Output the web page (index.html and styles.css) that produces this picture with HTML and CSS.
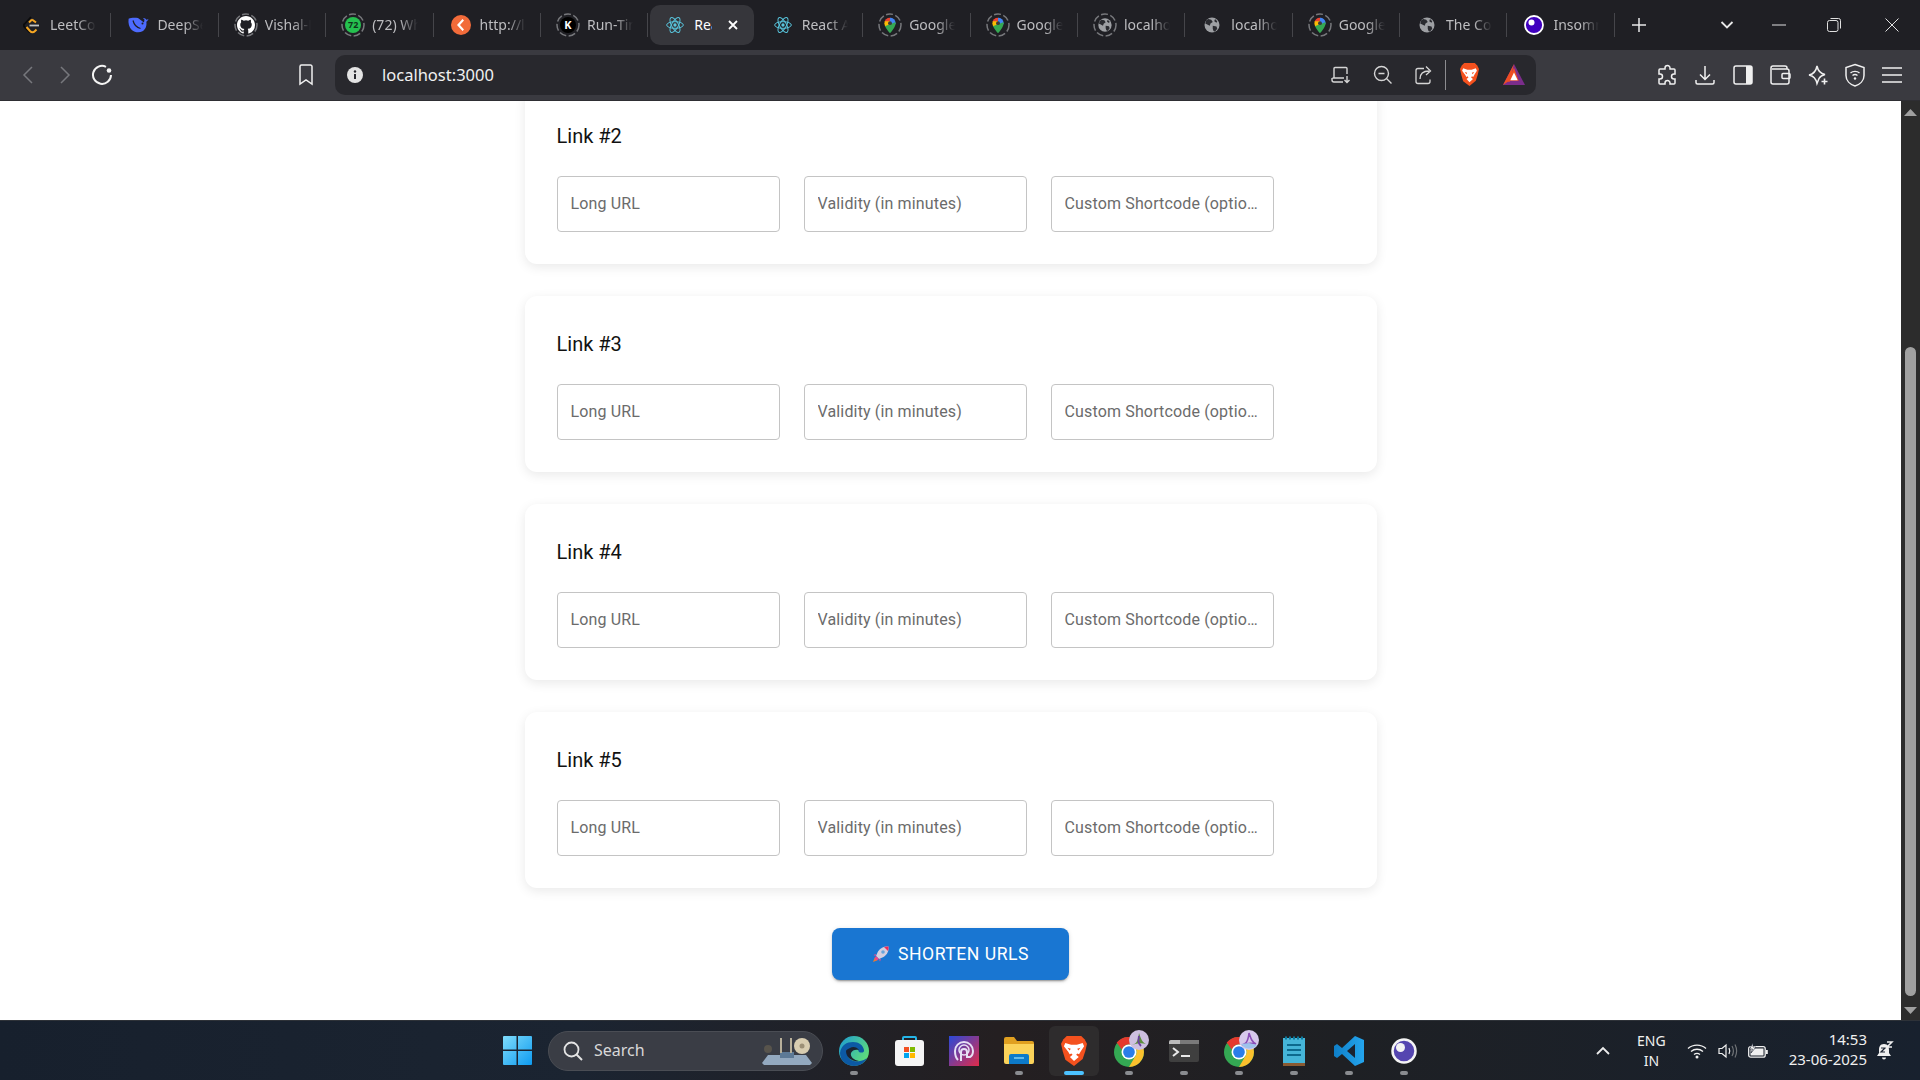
FILE: index.html

```html
<!DOCTYPE html>

<html>
    <head>
        <title>React App</title>
        <link rel="stylesheet" href="styles.css">
    </head>
    <body>
        <svg class="sprites" xmlns="http://www.w3.org/2000/svg">
            <defs>
                <clipPath id="pin_clip"><path d="M12 2a7.5 7.5 0 0 0-7.5 7.5C4.500 15 12 23 12 23s7.500-8 7.500-13.500A7.500 7.500 0 0 0 12 2z"/></clipPath>
                <linearGradient id="win_grad" x1="0" y1="0" x2="1" y2="1"><stop offset="0" stop-color="#7fdcfb"/><stop offset="1" stop-color="#0e9bf0"/></linearGradient>
                <linearGradient id="edge_grad" x1="0" y1="0" x2="1" y2="0.6"><stop offset="0" stop-color="#1b9ad6"/><stop offset="1" stop-color="#5fdc7a"/></linearGradient>
                <linearGradient id="code_grad" x1="0" y1="0" x2="1" y2="0"><stop offset="0" stop-color="#0f7fc8"/><stop offset="1" stop-color="#24a5ee"/></linearGradient>
                <linearGradient id="qs_grad" x1="0" y1="0" x2="1" y2="1"><stop offset="0" stop-color="#2a49d8"/><stop offset="1" stop-color="#e02b4a"/></linearGradient>
            </defs>
            <symbol id="ring" viewBox="0 0 24 24"><circle cx="12" cy="12" r="11" fill="none" stroke="#77787c" stroke-width="1.500" stroke-dasharray="7 2.500"/></symbol>
            <symbol id="react" viewBox="0 0 24 24"><g fill="none" stroke="#58c4dc" stroke-width="1.200"><ellipse cx="12" cy="12" rx="10" ry="4"/><ellipse cx="12" cy="12" rx="10" ry="4" transform="rotate(60 12 12)"/><ellipse cx="12" cy="12" rx="10" ry="4" transform="rotate(120 12 12)"/></g><circle cx="12" cy="12" r="2" fill="#58c4dc"/></symbol>
            <symbol id="pin" viewBox="0 0 24 24"><g clip-path="url(#pin_clip)"><rect x="4" y="1" width="9" height="7" fill="#ea4335"/><rect x="12" y="1" width="8" height="10" fill="#4285f4"/><rect x="4" y="7" width="8" height="7" fill="#fbbc04"/><path d="M4 14l16-6v16H4z" fill="#34a853"/></g><circle cx="12" cy="9.500" r="2.600" fill="#3b3b3b"/></symbol>
            <symbol id="globe" viewBox="0 0 24 24"><circle cx="12" cy="12" r="10" fill="#9ea0a4"/><path d="M7 4l4 1 2 3-3 2-1 3-4-2-2-1 1-4zM13 13l5 1 1 3-3 4-2-1-1-3zM16 4l3 3-1 2-3-2z" fill="#2a2b30"/></symbol>
            <symbol id="chrome" viewBox="0 0 48 48"><circle cx="24" cy="24" r="20" fill="#34a853"/><path d="M24 4a20 20 0 0 1 17.300 10H24a10 10 0 0 0-9.500 6.900L7.600 11.400A20 20 0 0 1 24 4z" fill="#e5392d"/><path d="M41.300 14A20 20 0 0 1 24 44l8.700-15A10 10 0 0 0 24 14z" fill="#fbc02d"/><circle cx="24" cy="24" r="10" fill="#fff"/><circle cx="24" cy="24" r="7.800" fill="#2a7de8"/></symbol>
            <symbol id="brave" viewBox="3 1.500 18 21.500" preserveAspectRatio="none"><path d="M7 1.500h10l2.300 2.300 1.700 3.200-1.200 5.500-1.800 5.500L12 23l-6-4.500L4.200 12.500 3 7l1.700-3.200z" fill="#f4511e"/><path d="M6 6.500l4 1.300h4l4-1.300 1 2.300-2.500 4-1 1.700-1.200-.5-.8 1 1.800 1.500L12 19.500l-2.800-3L11 15l-.8-1-1.200.5-1-1.700L5 8.800z" fill="#fff"/><path d="M7.500 10l2.300.6-.8 1.300zM16.500 10l-2.300.6.800 1.300z" fill="#f4511e"/></symbol>
            <symbol id="bat" viewBox="0 0 21 20"><path d="M10.500 0L0 20h21z" fill="#7b2d8b"/><path d="M10.500 0L0 20l4.500-3h2z" fill="#f04e23"/><path d="M10.500 3.500L15 16H4.500z" fill="#f04e23"/><path d="M10.500 8l3.500 7.500H7z" fill="#fff"/></symbol>
        </svg>

        <!-- Tab strip -->
        <div class="tab_strip">
            <div class="tab">
                <span class="tab_icon"><svg width="17" height="18" viewBox="0 0 17 18"><path d="M8 1L1.500 8c-1 1-1 2 0 3l5.500 5.500" fill="none" stroke="#0b0b0c" stroke-width="1.800"/><path d="M9 3.500L6 6.500" fill="none" stroke="#f5a623" stroke-width="2"/><path d="M3.500 11l3.500 4c1.500 1.500 3.500 1.500 5 0l1.500-1.500" fill="none" stroke="#f5a623" stroke-width="2"/><path d="M9 3.500l4 3" fill="none" stroke="#f5a623" stroke-width="2"/><path d="M6.500 9.500H16" stroke="#c4c4c4" stroke-width="1.800"/></svg></span>
                <span class="tab_title">LeetCode</span>
            </div>
            <div class="tab">
                <span class="tab_icon"><svg width="21" height="16" viewBox="0 0 21 16"><path d="M20.500 2c-.8.5-1.500.7-2.200.7C17.500 1.500 16 1 15 1.500l1.500 1-.5 3L10 1C7 .5 3 .5 .6 1.800 0 6 1 10.500 3.800 13c3 2.500 7.500 3 10.700 1.200 3.500-2 4.500-6.500 3.800-9.500 1-.7 1.800-1.500 2.200-2.700z" fill="#4d6bfe"/><circle cx="14.500" cy="6.500" r="1" fill="#1f1f24"/><path d="M5 3.500c1 4 3.500 7 7.500 8" fill="none" stroke="#1f1f24" stroke-width="1.200"/></svg></span>
                <span class="tab_title">DeepSeek</span>
            </div>
            <div class="tab">
                <span class="tab_icon"><svg class="tab_ring" width="24" height="24"><use href="#ring"/></svg><svg width="18" height="18" viewBox="0 0 16 16"><path fill="#fff" d="M8 0C3.580 0 0 3.580 0 8c0 3.540 2.290 6.530 5.470 7.590.4.070.55-.17.55-.38v-1.340c-2.230.48-2.700-1.070-2.700-1.070-.36-.92-.89-1.170-.89-1.170-.73-.5.060-.49.060-.49.800.06 1.230.82 1.230.82.710 1.220 1.870.87 2.330.66.070-.52.280-.87.510-1.070-1.780-.2-3.640-.89-3.640-3.950 0-.87.310-1.590.82-2.150-.08-.2-.36-1.020.08-2.120 0 0 .67-.21 2.200.82a7.700 7.700 0 0 1 4 0c1.530-1.040 2.200-.82 2.200-.82.440 1.100.16 1.920.08 2.120.51.560.82 1.270.82 2.150 0 3.070-1.870 3.750-3.650 3.950.29.250.54.730.54 1.480v2.200c0 .21.150.46.550.38A8 8 0 0 0 16 8c0-4.420-3.580-8-8-8z"/></svg></span>
                <span class="tab_title">Vishal-K</span>
            </div>
            <div class="tab">
                <span class="tab_icon"><svg class="tab_ring" width="24" height="24"><use href="#ring"/></svg><span class="wa_badge">72</span></span>
                <span class="tab_title">(72) WhatsApp</span>
            </div>
            <div class="tab">
                <span class="tab_icon"><svg width="20" height="20" viewBox="0 0 20 20"><circle cx="10" cy="10" r="10" fill="#f26b3a"/><path d="M11.500 4L6 10l5.500 6 1.500-1.500L9 10l4-4.500z" fill="#fff"/></svg></span>
                <span class="tab_title">http://localh</span>
            </div>
            <div class="tab">
                <span class="tab_icon"><svg class="tab_ring" width="24" height="24"><use href="#ring"/></svg><span class="k_badge">K</span></span>
                <span class="tab_title">Run-Time</span>
            </div>
            <div class="tab tab_active">
                <span class="tab_icon"><svg width="20" height="20"><use href="#react"/></svg></span>
                <span class="tab_title tab_title_short">React</span>
                <svg class="tab_close" width="12" height="12" viewBox="0 0 12 12"><path d="M2 2l8 8M10 2l-8 8" stroke="#fff" stroke-width="1.800"/></svg>
            </div>
            <div class="tab">
                <span class="tab_icon"><svg width="20" height="20"><use href="#react"/></svg></span>
                <span class="tab_title">React App</span>
            </div>
            <div class="tab">
                <span class="tab_icon"><svg class="tab_ring" width="24" height="24"><use href="#ring"/></svg><svg width="18" height="18"><use href="#pin"/></svg></span>
                <span class="tab_title">Google Maps</span>
            </div>
            <div class="tab">
                <span class="tab_icon"><svg class="tab_ring" width="24" height="24"><use href="#ring"/></svg><svg width="18" height="18"><use href="#pin"/></svg></span>
                <span class="tab_title">Google Maps</span>
            </div>
            <div class="tab">
                <span class="tab_icon"><svg class="tab_ring" width="24" height="24"><use href="#ring"/></svg><svg width="16" height="16"><use href="#globe"/></svg></span>
                <span class="tab_title">localhost</span>
            </div>
            <div class="tab">
                <span class="tab_icon"><svg width="18" height="18"><use href="#globe"/></svg></span>
                <span class="tab_title">localhost</span>
            </div>
            <div class="tab">
                <span class="tab_icon"><svg class="tab_ring" width="24" height="24"><use href="#ring"/></svg><svg width="18" height="18"><use href="#pin"/></svg></span>
                <span class="tab_title">Google Maps</span>
            </div>
            <div class="tab">
                <span class="tab_icon"><svg width="18" height="18"><use href="#globe"/></svg></span>
                <span class="tab_title">The Code</span>
            </div>
            <div class="tab">
                <span class="tab_icon"><svg width="20" height="20" viewBox="0 0 20 20"><circle cx="10" cy="10" r="9" fill="#4000bf" stroke="#fff" stroke-width="1.800"/><circle cx="7.500" cy="7.500" r="3" fill="#fff"/></svg></span>
                <span class="tab_title">Insomnia</span>
            </div>
            <svg class="new_tab" width="14" height="14" viewBox="0 0 14 14"><path d="M7 0v14M0 7h14" stroke="#e8e8e8" stroke-width="1.500"/></svg>
            <svg class="tab_search" width="14" height="10" viewBox="0 0 14 10"><path d="M1.500 2L7 7.500 12.500 2" fill="none" stroke="#e8e8e8" stroke-width="1.800"/></svg>
            <svg class="win_minimize" width="14" height="2" viewBox="0 0 14 2"><path d="M0 1h14" stroke="#e0e0e0"/></svg>
            <svg class="win_restore" width="14" height="14" viewBox="0 0 14 14"><rect x=".5" y="2.500" width="10.500" height="11" rx="2" fill="none" stroke="#e0e0e0"/><path d="M3.500 .5h8a2 2 0 0 1 2 2v8" fill="none" stroke="#e0e0e0"/></svg>
            <svg class="win_close" width="14" height="14" viewBox="0 0 14 14"><path d="M.5 .5l13 13M13.500 .5l-13 13" stroke="#e0e0e0"/></svg>
        </div>

        <!-- Toolbar -->
        <div class="toolbar">
            <svg class="tool_back" width="12" height="20" viewBox="0 0 12 20"><path d="M10 2L2 10l8 8" fill="none" stroke="#77787d" stroke-width="1.500"/></svg>
            <svg class="tool_forward" width="12" height="20" viewBox="0 0 12 20"><path d="M2 2l8 8-8 8" fill="none" stroke="#77787d" stroke-width="1.500"/></svg>
            <svg class="tool_reload" width="22" height="22" viewBox="0 0 22 22"><path d="M15 2.800A9 9 0 1 0 20 11" fill="none" stroke="#f4f4f4" stroke-width="2"/><circle cx="18" cy="6.500" r="2.300" fill="#f4f4f4"/></svg>
            <svg class="tool_bookmark" width="16" height="22" viewBox="0 0 16 22"><path d="M2 2.500A1.500 1.500 0 0 1 3.500 1h9A1.500 1.500 0 0 1 14 2.500V20l-6-4-6 4z" fill="none" stroke="#efefef" stroke-width="1.500"/></svg>
            <div class="address_bar">
                <svg class="address_info" width="16" height="16" viewBox="0 0 16 16"><circle cx="8" cy="8" r="8" fill="#e4e4e4"/><path d="M8 7v5" stroke="#28282d" stroke-width="2"/><circle cx="8" cy="4.500" r="1.200" fill="#28282d"/></svg>
                <span class="address_text">localhost:3000</span>
                <svg class="address_install" width="20" height="18" viewBox="0 0 20 18"><path d="M13 12H1.500M3 12V2.500A1 1 0 0 1 4 1.500h11a1 1 0 0 1 1 1V8M1 12v2a2 2 0 0 0 2 2h9" fill="none" stroke="#d5d5d5" stroke-width="1.400"/><path d="M16 10v6M13.500 14l2.500 2.500 2.500-2.500" fill="none" stroke="#d5d5d5" stroke-width="1.400"/></svg>
                <svg class="address_zoom" width="20" height="20" viewBox="0 0 20 20"><circle cx="8.500" cy="8.500" r="7" fill="none" stroke="#d5d5d5" stroke-width="1.400"/><path d="M13.500 13.500l5 5M5.500 8.500h6" stroke="#d5d5d5" stroke-width="1.400"/></svg>
                <svg class="address_share" width="20" height="20" viewBox="0 0 20 20"><path d="M9 4H3a2 2 0 0 0-2 2v11a2 2 0 0 0 2 2h10a2 2 0 0 0 2-2v-2" fill="none" stroke="#d5d5d5" stroke-width="1.300" transform="translate(0 -.5)"/><path d="M5 14c0-6 4-8 9-8M11 1.500L15.500 6 11 10" fill="none" stroke="#d5d5d5" stroke-width="1.300"/></svg>
                <span class="address_sep"></span>
                <svg class="address_brave" width="19" height="23"><use href="#brave"/></svg>
                <svg class="address_bat" width="22" height="21"><use href="#bat"/></svg>
            </div>
            <svg class="tool_puzzle" width="22" height="22" viewBox="0 0 22 22"><path d="M8 4a2.500 2.500 0 0 1 5 0v1h4a1 1 0 0 1 1 1v4h-1a2.500 2.500 0 0 0 0 5h1v4a1 1 0 0 1-1 1h-4v-1a2.500 2.500 0 0 0-5 0v1H3a1 1 0 0 1-1-1v-4h1a2.500 2.500 0 0 0 0-5H2V6a1 1 0 0 1 1-1h5z" fill="none" stroke="#f0f0f0" stroke-width="1.500"/></svg>
            <svg class="tool_icon" width="22" height="22" viewBox="0 0 22 22"><path d="M11 2v13M6 10.500l5 5 5-5M2 16v2.500A1.500 1.500 0 0 0 3.500 20h15a1.500 1.500 0 0 0 1.500-1.500V16" fill="none" stroke="#f0f0f0" stroke-width="1.500"/></svg>
            <svg class="tool_icon" width="22" height="22" viewBox="0 0 22 22"><rect x="2" y="2" width="18" height="18" rx="2" fill="none" stroke="#f0f0f0" stroke-width="1.500"/><rect x="14" y="2" width="6" height="18" fill="#f0f0f0"/></svg>
            <svg class="tool_icon" width="22" height="22" viewBox="0 0 22 22"><path d="M18 5V4a2 2 0 0 0-2-2H4a2 2 0 0 0-2 2v14a2 2 0 0 0 2 2h14a2 2 0 0 0 2-2V7a2 2 0 0 0-2-2H3" fill="none" stroke="#f0f0f0" stroke-width="1.500"/><rect x="13" y="9.500" width="8" height="5" rx="1" fill="none" stroke="#f0f0f0" stroke-width="1.500"/></svg>
            <svg class="tool_icon" width="22" height="22" viewBox="0 0 22 22"><path d="M10 2c1 5 3 7.500 8 8.500-3 .8-5 2-6 4l-2 5c-1-5-3-7.500-8-8.500 5-1 7-3.500 8-9z" fill="none" stroke="#f0f0f0" stroke-width="1.500"/><path d="M17.500 14.500v6M14.500 17.500h6" stroke="#f0f0f0" stroke-width="1.600"/></svg>
            <svg class="tool_icon" width="22" height="24" viewBox="0 0 22 24"><path d="M11 1.500l9 3v8c0 5-4 9-9 10.500-5-1.500-9-5.500-9-10.500v-8z" fill="none" stroke="#f0f0f0" stroke-width="1.500"/><path d="M6.500 10c2.500-2.200 6.500-2.200 9 0M8.500 12.500c1.500-1.300 3.500-1.300 5 0" fill="none" stroke="#f0f0f0" stroke-width="1.400"/><circle cx="11" cy="15.500" r="1.200" fill="#f0f0f0"/></svg>
            <svg class="tool_icon" width="22" height="18" viewBox="0 0 22 18"><path d="M1 2h20M1 9h20M1 16h20" stroke="#f0f0f0" stroke-width="1.500"/></svg>
        </div>

        <!-- Page -->
        <div class="viewport">
            <div class="page">
                <div class="form_stack">
                    <div class="link_card">
                        <h6 class="link_title">Link #2</h6>
                        <div class="link_row">
                            <input class="link_input" type="text" placeholder="Long URL">
                            <input class="link_input" type="text" placeholder="Validity (in minutes)">
                            <input class="link_input" type="text" placeholder="Custom Shortcode (optional)">
                        </div>
                    </div>
                    <div class="link_card">
                        <h6 class="link_title">Link #3</h6>
                        <div class="link_row">
                            <input class="link_input" type="text" placeholder="Long URL">
                            <input class="link_input" type="text" placeholder="Validity (in minutes)">
                            <input class="link_input" type="text" placeholder="Custom Shortcode (optional)">
                        </div>
                    </div>
                    <div class="link_card">
                        <h6 class="link_title">Link #4</h6>
                        <div class="link_row">
                            <input class="link_input" type="text" placeholder="Long URL">
                            <input class="link_input" type="text" placeholder="Validity (in minutes)">
                            <input class="link_input" type="text" placeholder="Custom Shortcode (optional)">
                        </div>
                    </div>
                    <div class="link_card">
                        <h6 class="link_title">Link #5</h6>
                        <div class="link_row">
                            <input class="link_input" type="text" placeholder="Long URL">
                            <input class="link_input" type="text" placeholder="Validity (in minutes)">
                            <input class="link_input" type="text" placeholder="Custom Shortcode (optional)">
                        </div>
                    </div>
                </div>
                <button class="shorten_button">
                    <svg class="rocket" width="18" height="18" viewBox="0 0 18 18"><path d="M3 12l-2 5 5-2z" fill="#ee7b2c"/><path d="M4 9L1.500 10l2 1zM9 14l-1 2.500-1-2z" fill="#f0468a"/><path d="M16.500 1.500c-4-.5-8 1-10.500 5L4 11l3 3 4.500-2c4-2.500 5.500-6.500 5-10.500z" fill="#d5cfe0"/><path d="M16.500 1.500c-1.500-.2-3 0-4.500.5L16 6c.5-1.500.7-3 .5-4.500z" fill="#ee2c5a"/><circle cx="11" cy="7" r="1.800" fill="#6aa5dc"/><path d="M4 11l3 3-2.500 1.500-2-2z" fill="#f0468a"/></svg>
                    <span>Shorten URLs</span>
                </button>
            </div>
            <div class="scrollbar">
                <svg class="scroll_arrow_up" width="13" height="7" viewBox="0 0 13 7"><path d="M6.500 0L13 7H0z" fill="#a0a0a0"/></svg>
                <div class="scroll_thumb"></div>
                <svg class="scroll_arrow_down" width="13" height="7" viewBox="0 0 13 7"><path d="M6.500 7L13 0H0z" fill="#a0a0a0"/></svg>
            </div>
        </div>

        <!-- Taskbar -->
        <div class="taskbar">
            <svg class="start_icon" width="29" height="29" viewBox="0 0 29 29"><path d="M0 1a1 1 0 0 1 1-1h12.500v13.500H0zM15 0h13a1 1 0 0 1 1 1v12.500H15zM0 15h13.500v14H1a1 1 0 0 1-1-1zM15 15h14v13a1 1 0 0 1-1 1H15z" fill="url(#win_grad)"/></svg>
            <div class="search_pill">
                <svg width="20" height="20" viewBox="0 0 20 20"><circle cx="8.500" cy="8.500" r="7" fill="none" stroke="#e4e4e4" stroke-width="1.800"/><path d="M13.500 13.500l5.500 5.500" stroke="#e4e4e4" stroke-width="2"/></svg>
                <span class="search_text">Search</span>
                <svg class="search_art" width="50" height="30" viewBox="0 0 50 30"><path d="M0 27l6-8h38l6 8-2 2H2z" fill="#93a9bf"/><rect x="18" y="16" width="14" height="6" fill="#5d7a96"/><rect x="18" y="2" width="2" height="15" fill="#b8b09a"/><rect x="28" y="2" width="2" height="15" fill="#b8b09a"/><circle cx="40" cy="10" r="8" fill="#d8cdb0"/><circle cx="40" cy="10" r="2.500" fill="#9c9076"/><circle cx="6" cy="13" r="4" fill="#58544c"/></svg>
            </div>
            <div class="task_icons">
                <div class="task_item task_open">
                    <svg width="30" height="30" viewBox="0 0 30 30"><circle cx="15" cy="15" r="15" fill="url(#edge_grad)"/><path d="M1 17C2 9 8 6 14 6c6 0 10 3 11 8 .5 3-3 3-5 2-1-4-4-5-7-4-4 1-5 5-4 8 1 4 6 6 12 5 3-.5 5-1.500 7-3-2 4-6 8-13 8C8 30 1 25 1 17z" fill="#0c59a4"/><path d="M11 12c3-2 7-1 9 2-3-1-7 0-8 3-1 4 3 7 8 8-6 1-13-3-13-10 0-1 2-2 4-3z" fill="#1b2230"/></svg>
                </div>
                <div class="task_item">
                    <svg width="29" height="30" viewBox="0 0 29 30"><path d="M8 4V2a1 1 0 0 1 1-1h11a1 1 0 0 1 1 1v2" fill="none" stroke="#25b5e8" stroke-width="2"/><rect x="0" y="4" width="29" height="26" rx="3" fill="#f5f5f5"/><rect x="9" y="11" width="5" height="5" fill="#f25022"/><rect x="15" y="11" width="5" height="5" fill="#7fba00"/><rect x="9" y="17" width="5" height="5" fill="#00a4ef"/><rect x="15" y="17" width="5" height="5" fill="#ffb900"/></svg>
                </div>
                <div class="task_item">
                    <svg width="30" height="30" viewBox="0 0 30 30"><rect width="30" height="30" fill="url(#qs_grad)"/><path d="M9 24c-2-2-3-5-3-9a9 9 0 0 1 18 0c0 3-1 5-3 6h-3v-5a3 3 0 0 0-6 0v9" fill="none" stroke="#e6e0f5" stroke-width="2"/><circle cx="15" cy="14" r="5" fill="none" stroke="#e6e0f5" stroke-width="1.500"/></svg>
                </div>
                <div class="task_item task_open">
                    <svg width="30" height="27" viewBox="0 0 30 27"><path d="M0 2a2 2 0 0 1 2-2h8l3 4h15a2 2 0 0 1 2 2v5H0z" fill="#e0a020"/><path d="M0 7h30v18a2 2 0 0 1-2 2H2a2 2 0 0 1-2-2z" fill="#fbd35a"/><path d="M5 24v-5a2 2 0 0 1 2-2h16a2 2 0 0 1 2 2v8H5z" fill="#0d7ac9"/><path d="M10 21h10" stroke="#7fd0f5" stroke-width="1.500"/></svg>
                </div>
                <div class="task_item task_active">
                    <svg width="26" height="30"><use href="#brave"/></svg>
                </div>
                <div class="task_item task_open">
                    <svg class="chrome_logo" width="36" height="36"><use href="#chrome"/></svg>
                    <svg class="profile_badge" width="20" height="20" viewBox="0 0 20 20"><circle cx="10" cy="10" r="10" fill="#cdbfe0"/><path d="M3 15c3-1 6-2 7-12 2 6 3 9 7 11-4-1-9-1-14 1z" fill="#5b8f3c"/><path d="M10 6c-1 5-1 7 2 10" fill="none" stroke="#6b3fa0" stroke-width="1.800"/></svg>
                </div>
                <div class="task_item task_open">
                    <svg width="30" height="22" viewBox="0 0 30 22"><rect width="30" height="22" rx="2" fill="#3f3f3f"/><path d="M0 2a2 2 0 0 1 2-2h9v4H0z" fill="#bcbcbc"/><rect x="11" width="19" height="4" fill="#7a7a7a"/><path d="M4 8l5 4-5 4" fill="none" stroke="#e8e8e8" stroke-width="2"/><path d="M12 16h9" stroke="#e8e8e8" stroke-width="2"/></svg>
                </div>
                <div class="task_item task_open">
                    <svg class="chrome_logo" width="36" height="36"><use href="#chrome"/></svg>
                    <svg class="profile_badge" width="20" height="20" viewBox="0 0 20 20"><circle cx="10" cy="10" r="10" fill="#d6c8ec"/><path d="M3 15c3-1 6-2 7-12 2 6 3 9 7 11-4-1-9-1-14 1z" fill="none" stroke="#8a4fb8" stroke-width="1.600"/><path d="M2 14a10 10 0 0 0 16 1l-8-2z" fill="#9ec2ec"/></svg>
                </div>
                <div class="task_item task_open">
                    <svg width="22" height="30" viewBox="0 0 22 30"><rect y="2" width="22" height="26" fill="#45b5d8"/><rect y="27" width="22" height="3" fill="#8a5a32"/><path d="M2 2h2M6 2h2M10 2h2M14 2h2M18 2h2" stroke="#0d7a9e" stroke-width="3"/><path d="M4 9h14M4 14h14M4 19h14" stroke="#0d6a8e" stroke-width="2"/></svg>
                </div>
                <div class="task_item task_open">
                    <svg width="30" height="30" viewBox="0 0 30 30"><path d="M21 0l9 4v22l-9 4L8 18l-5 4-3-2v-10l3-2 5 4z" fill="url(#code_grad)"/><path d="M21 8l-8 7 8 7z" fill="#1b2230"/></svg>
                </div>
                <div class="task_item task_open">
                    <svg width="26" height="26" viewBox="0 0 26 26"><circle cx="13" cy="13" r="11.500" fill="#5546b0" stroke="#f4f4f4" stroke-width="2.500"/><circle cx="9.500" cy="9.500" r="4.500" fill="#f4f4f4"/></svg>
                </div>
            </div>
            <div class="tray">
                <svg class="tray_chevron" width="14" height="9" viewBox="0 0 14 9"><path d="M1 8l6-6 6 6" fill="none" stroke="#ededed" stroke-width="1.800"/></svg>
                <div class="tray_lang"><span>ENG</span><span>IN</span></div>
                <svg class="tray_wifi" width="20" height="16" viewBox="0 0 20 16"><path d="M1 5.500c5-4.500 13-4.500 18 0M4 8.500c3.500-3 8.500-3 12 0M7 11.500c2-1.500 4-1.500 6 0" fill="none" stroke="#f0f0f0" stroke-width="1.300"/><circle cx="10" cy="14" r="1.500" fill="#f0f0f0"/></svg>
                <svg class="tray_volume" width="20" height="16" viewBox="0 0 20 16"><path d="M1 5.500v5h3l4 3.500V2L4 5.500z" fill="none" stroke="#f0f0f0" stroke-width="1.200"/><path d="M11 5c1 2 1 4 0 6" fill="none" stroke="#f0f0f0" stroke-width="1.200"/><path d="M14 3c1.700 3 1.700 7 0 10M17 1.500c2 4 2 9 0 13" fill="none" stroke="#6f7276" stroke-width="1.200"/></svg>
                <svg class="tray_battery" width="20" height="16" viewBox="0 0 20 16"><rect x=".7" y="3.700" width="16.500" height="10.500" rx="2" fill="none" stroke="#f0f0f0" stroke-width="1.300"/><rect x="2.500" y="5.500" width="13" height="7" fill="#f0f0f0"/><rect x="18" y="7" width="1.800" height="4" fill="#f0f0f0"/><path d="M5 0L1.500 6h3L3 10l5-6H5z" fill="#f0f0f0" stroke="#1b2230" stroke-width=".6"/></svg>
                <div class="tray_clock"><span>14:53</span><span>23-06-2025</span></div>
                <svg class="tray_bell" width="18" height="20" viewBox="0 0 18 20"><path d="M8 3C4 3 3 6 3 9v3l-2 3h14l-2-3V9c0-3-1-6-5-6z" fill="#f0f0f0"/><path d="M6 16.500h4a2 2 0 0 1-4 0z" fill="#f0f0f0"/><path d="M5 7h4l-4 4h4" fill="none" stroke="#1b2230" stroke-width="1.200"/><path d="M11 1h5l-5 5h5" fill="none" stroke="#f0f0f0" stroke-width="1.500"/></svg>
            </div>
        </div>
    </body>
</html>
```

FILE: styles.css

```css
html, body {
    margin: 0;      padding: 0;
    width: 100%;    height: 100%;
    overflow: hidden;

    --strip-bg:     #1f1f24;
    --toolbar-bg:   #3a3a40;
    --address-bg:   #28282d;
    --ui-font:      "Noto Sans", "Open Sans", sans-serif;
    --page-font:    "Roboto", "Liberation Sans", sans-serif;

    background-color: #FFFFFF;
    font-family: var(--page-font);
}

body {
    display: flex;
    flex-direction: column;
}

.sprites {
    position: absolute;
    width: 0;   height: 0;
}

/* Tab strip */
.tab_strip {
    display: flex;
    align-items: center;
    flex: none;
    height: 50px;
    padding-left: 4px;
    background-color: var(--strip-bg);
    font-family: var(--ui-font);
}
.tab {
    display: flex;
    align-items: center;
    position: relative;
    box-sizing: border-box;
    flex: none;
    width: 107.4px; height: 40px;
    padding-left: 15px;
    color: #BDBDC0;
}
.tab:after {
    content: "";
    position: absolute;
    top: 8px;   right: 0;
    width: 1px; height: 24px;
    background-color: #45454A;
}
.tab_active {
    padding-left: 13px;
    margin-left: 2px;   margin-right: 2px;
    width: 103.4px;
    border-radius: 10px;
    background-color: #36363B;
    color: #FFFFFF;
}
.tab_active:after {
    display: none;
}
.tab_icon {
    display: flex;
    align-items: center;
    justify-content: center;
    position: relative;
    flex: none;
    width: 24px;    height: 24px;
}
.tab_ring {
    position: absolute;
    top: 0;     left: 0;
}
.tab_title {
    margin-left: 7px;
    padding-bottom: 2px;
    width: 46px;
    overflow: hidden;
    white-space: nowrap;
    font-size: 14px;
    -webkit-mask-image: linear-gradient(90deg, #000 60%, transparent 100%);
    mask-image: linear-gradient(90deg, #000 60%, transparent 100%);
}
.tab_title_short {
    width: 18px;
    -webkit-mask-image: none;
    mask-image: none;
}
.tab_close {
    margin-left: 15px;
}
.wa_badge {
    display: block;
    width: 16px;    height: 16px;
    border-radius: 50%;
    background-color: #25C04F;
    color: #10331B;
    font-size: 9px;
    font-weight: bold;
    line-height: 16px;
    text-align: center;
}
.k_badge {
    display: block;
    width: 16px;    height: 16px;
    border-radius: 50%;
    background-color: #000000;
    color: #FFFFFF;
    font-size: 11px;
    font-weight: bold;
    line-height: 16px;
    text-align: center;
}
.new_tab        { margin-left: 17px; }
.tab_search     { margin-left: 74px; }
.win_minimize   { margin-left: 38px; }
.win_restore    { margin-left: 41px; }
.win_close      { margin-left: 44px; }

/* Toolbar */
.toolbar {
    display: flex;
    align-items: center;
    flex: none;
    box-sizing: border-box;
    height: 51px;
    padding-left: 22px;
    padding-bottom: 1px;
    background-color: var(--toolbar-bg);
    border-bottom: solid 1px #2E2E33;
}
.tool_forward   { margin-left: 25px; }
.tool_reload    { margin-left: 20px; }
.tool_bookmark  { margin-left: 185px; }
.tool_puzzle    { margin-left: 121px; }
.tool_icon      { margin-left: 15.4px; }

.address_bar {
    display: flex;
    align-items: center;
    box-sizing: border-box;
    width: 1201px;  height: 40px;
    margin-left: 21px;
    padding-left: 12px;
    border-radius: 10px;
    background-color: var(--address-bg);
    color: #F0F0F0;
    font-family: var(--ui-font);
}
.address_text {
    margin-left: 19px;
    width: 949px;
    font-size: 16.5px;
}
.address_zoom   { margin-left: 22px; }
.address_share  { margin-left: 22px; }
.address_sep {
    width: 1px;     height: 30px;
    margin-left: 10px;
    background-color: #8C8C90;
}
.address_brave  { margin-left: 14px; }
.address_bat    { margin-left: 24px; }

/* Page */
.viewport {
    display: flex;
    flex: 1;
    min-height: 0;
}
.page {
    flex: 1;
    overflow: hidden;
    display: flex;
    flex-direction: column;
    align-items: center;
}
.form_stack {
    display: flex;
    flex-direction: column;
    gap: 32px;
    width: 852px;
    margin-top: -13px;
}
.link_card {
    box-sizing: border-box;
    height: 176px;
    padding: 32px;
    border-radius: 12px;
    background-color: #FFFFFF;
    box-shadow: 0 3px 12px rgba(0, 0, 0, 0.09);
}
.link_title {
    margin: 0 0 24px 0;
    font-size: 20px;
    font-weight: 400;
    line-height: 32px;
    color: #111111;
}
.link_row {
    display: flex;
    gap: 24px;
}
.link_input {
    box-sizing: border-box;
    width: 223px;   height: 56px;
    padding: 14px 14px 16px 13px;
    border: solid 1px #C4C4C4;
    border-radius: 4px;
    outline: none;
    background-color: #FFFFFF;
    font-family: var(--page-font);
    font-size: 16px;
    letter-spacing: 0.15px;
    text-overflow: ellipsis;
}
.link_input::placeholder {
    color: #6B6B6B;
    opacity: 1;
}
.shorten_button {
    display: flex;
    align-items: center;
    justify-content: center;
    gap: 8px;
    flex: none;
    box-sizing: border-box;
    width: 237px;   height: 52px;
    margin-top: 40px;
    border: none;
    border-radius: 8px;
    background-color: #1976D2;
    box-shadow: 0 3px 1px -2px rgba(0,0,0,0.2), 0 2px 2px 0 rgba(0,0,0,0.14), 0 1px 5px 0 rgba(0,0,0,0.12);
    color: #FFFFFF;
    font-family: var(--page-font);
    font-size: 17.6px;
    font-weight: 400;
    letter-spacing: 0.02857em;
    text-transform: uppercase;
}

/* Scrollbar */
.scrollbar {
    position: relative;
    flex: none;
    width: 19px;
    background-color: #2C2C2C;
}
.scroll_arrow_up {
    position: absolute;
    top: 8px;   left: 3px;
}
.scroll_arrow_down {
    position: absolute;
    bottom: 6px;    left: 3px;
}
.scroll_thumb {
    position: absolute;
    top: 246px;     left: 4px;
    width: 11px;    height: 649px;
    border-radius: 6px;
    background-color: #A0A0A0;
}

/* Taskbar */
.taskbar {
    display: flex;
    align-items: center;
    flex: none;
    box-sizing: border-box;
    height: 60px;
    padding-left: 503px;
    border-top: solid 1px #2E3238;
    background: linear-gradient(90deg, #17202D 0%, #1B2431 30%, #241F21 52%, #1E2024 70%, #18212E 100%);
    color: #F0F0F0;
    font-family: var(--ui-font);
}
.start_icon {
    flex: none;
}
.search_pill {
    display: flex;
    align-items: center;
    flex: none;
    box-sizing: border-box;
    width: 275px;   height: 40px;
    margin-left: 16px;
    padding-left: 14px;
    border-radius: 20px;
    border: solid 1px #4A4D54;
    background-color: #3A3D45;
}
.search_text {
    margin-left: 11px;
    padding-bottom: 1px;
    color: #D8D8D8;
    font-size: 16px;
}
.search_art {
    margin-left: auto;
    margin-right: 10px;
}
.task_icons {
    display: flex;
    flex: none;
    margin-left: 6px;
}
.task_item {
    display: flex;
    align-items: center;
    justify-content: center;
    position: relative;
    flex: none;
    width: 50px;    height: 50px;
    margin-right: 5px;
    border-radius: 6px;
}
.task_open:after {
    content: "";
    position: absolute;
    left: 21px;     bottom: 1px;
    width: 8px;     height: 4px;
    border-radius: 2px;
    background-color: #8A8C90;
}
.task_active {
    background-color: #2E2C2D;
}
.task_active:after {
    content: "";
    position: absolute;
    left: 15px;     bottom: 1px;
    width: 20px;    height: 4px;
    border-radius: 2px;
    background-color: #4CC2FF;
}
.chrome_logo {
    position: relative;
    top: 1px;
}
.profile_badge {
    position: absolute;
    top: 4px;   right: 5px;
}

/* Tray */
.tray {
    display: flex;
    align-items: center;
    margin-left: auto;
    padding-right: 26px;
}
.tray_lang {
    display: flex;
    flex-direction: column;
    align-items: center;
    margin-left: 27px;
    font-size: 14px;
    line-height: 20px;
}
.tray_wifi      { margin-left: 21px; }
.tray_volume    { margin-left: 11px; }
.tray_battery   { margin-left: 10px; }
.tray_clock {
    display: flex;
    flex-direction: column;
    align-items: flex-end;
    margin-left: 21px;
    padding-bottom: 4px;
    font-size: 15px;
    line-height: 20px;
}
.tray_bell      { margin-left: 9px; }
```
